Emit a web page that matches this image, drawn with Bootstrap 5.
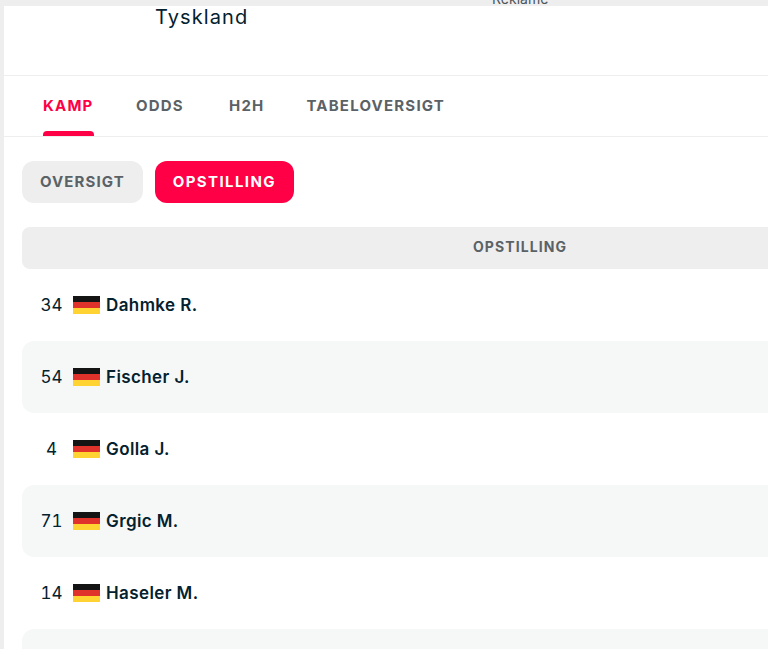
<!DOCTYPE html>
<html lang="da">
<head>
  <meta charset="UTF-8" />
  <meta name="viewport" content="width=device-width, initial-scale=1.0"/>
  <title>Opstilling</title>
  <link href="https://cdn.jsdelivr.net/npm/bootstrap@5.3.3/dist/css/bootstrap.min.css" rel="stylesheet">
  <style>
    html, body { height: 100%; overflow: hidden; }
    body { background: #eeeeee; font-family: Inter, "Liberation Sans", sans-serif; color: #03212e; }
    .ad-strip { height: 6px; padding-left: 492px; font-size: 14px; line-height: 14px; color: #4d5659; }
    .page-panel { width: 1036px; margin-left: 4px; background: #fff; }
    .match-head { height: 70px; padding-left: 151px; font-size: 20px; line-height: 22px; letter-spacing: 1.1px; border-bottom: 1px solid #eeeeee; }
    .tab-bar { height: 61px; padding-left: 39px; gap: 42px; border-bottom: 1px solid #eeeeee; }
    .tab-link { height: 60px; padding-top: 21px; font-size: 15px; line-height: 18px; font-weight: 700; letter-spacing: 1.2px; color: #5a6266; text-decoration: none; position: relative; }
    .tab-link:nth-child(1) { min-width: 51px; }
    .tab-link:nth-child(2) { min-width: 51px; }
    .tab-link.is-active { color: #ff0046; }
    .tab-link.is-active::after { content: ""; position: absolute; left: 0; right: 0; bottom: 0; height: 5px; background: #ff0046; border-radius: 4px 4px 0 0; }
    .chip-row { padding: 24px 0 24px 18px; gap: 12px; }
    .chip-btn { height: 42px; padding: 0 18px; border: 0; border-radius: 12px; font-size: 15px; font-weight: 700; letter-spacing: 1.1px; background: #eeeeee; color: #5a6266; }
    .chip-btn.is-on { background: #ff0046; color: #fff; letter-spacing: 1.4px; }
    .lineup { margin: 0 22px 0 18px; }
    .lineup-head { height: 42px; padding-bottom: 3px; border-radius: 8px; background: #eeeeee; font-size: 14px; font-weight: 700; letter-spacing: 1.1px; color: #5a6266; }
    .player-row { height: 72px; font-size: 17px; border-radius: 12px; }
    .player-row:nth-child(even) { background: #f6f8f8; }
    .shirt-no { width: 25px; margin-left: 17px; text-align: center; font-variant-numeric: tabular-nums; padding-top: 1px; }
    .flag-de { width: 27px; height: 18px; margin: 0 6px 0 9px; background: linear-gradient(#141414 33.3%, #e1312b 33.3% 66.6%, #ffd432 66.6%); }
    .player-name { font-weight: 600; letter-spacing: .4px; padding-top: 1px; }
  </style>
</head>
<body>
  <div class="ad-strip d-flex align-items-end overflow-hidden"><span>Reklame</span></div>
  <div class="page-panel">
    <div class="match-head">Tyskland</div>

    <nav class="tab-bar d-flex">
      <a class="tab-link is-active" href="#">KAMP</a>
      <a class="tab-link" href="#">ODDS</a>
      <a class="tab-link" href="#">H2H</a>
      <a class="tab-link" href="#">TABELOVERSIGT</a>
    </nav>

    <div class="chip-row d-flex">
      <button class="chip-btn" type="button">OVERSIGT</button>
      <button class="chip-btn is-on" type="button">OPSTILLING</button>
    </div>

    <div class="lineup">
      <div class="lineup-head d-flex align-items-center justify-content-center">OPSTILLING</div>
      <div id="spillere"></div>
    </div>
  </div>

  <script>
    const spillere = [
      ["34", "Dahmke R."],
      ["54", "Fischer J."],
      ["4", "Golla J."],
      ["71", "Grgic M."],
      ["14", "Haseler M."],
      ["", ""]
    ];
    document.getElementById("spillere").innerHTML = spillere.map(s => `
      <div class="player-row d-flex align-items-center">
        <span class="shirt-no">${s[0]}</span>
        ${s[1] ? '<span class="flag-de"></span>' : ''}
        <span class="player-name">${s[1]}</span>
      </div>`).join("");
  </script>
  <script src="https://cdn.jsdelivr.net/npm/bootstrap@5.3.3/dist/js/bootstrap.bundle.min.js"></script>
</body>
</html>
